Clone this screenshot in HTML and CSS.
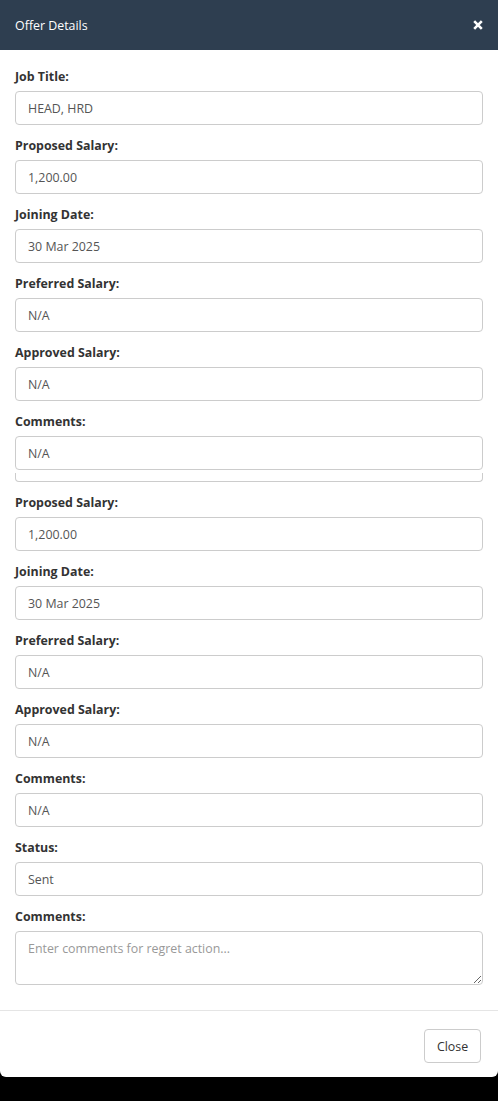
FILE: index.html
```html
<!DOCTYPE html>
<html lang="en">
<head>
<meta charset="utf-8">
<title>Offer Details</title>
<link rel="stylesheet" href="styles.css">
</head>
<body>
<div class="modal">
  <div class="modal-header">
    <span class="modal-title">Offer Details</span>
    <button class="close-x" aria-label="Close">
      <svg width="10" height="10" viewBox="0 0 10 10"><path d="M1.2 1.2 L8.8 8.8 M8.8 1.2 L1.2 8.8" stroke="#fff" stroke-width="2.6" stroke-linecap="butt"/></svg>
    </button>
  </div>
  <div class="modal-body">
    <div class="group"><label class="lbl">Job Title:</label><div class="field">HEAD, HRD</div></div>
    <div class="group"><label class="lbl">Proposed Salary:</label><div class="field">1,200.00</div></div>
    <div class="group"><label class="lbl">Joining Date:</label><div class="field">30 Mar 2025</div></div>
    <div class="group"><label class="lbl">Preferred Salary:</label><div class="field">N/A</div></div>
    <div class="group"><label class="lbl">Approved Salary:</label><div class="field">N/A</div></div>
    <div class="group"><label class="lbl">Comments:</label><div class="field">N/A</div><div class="field-tail"></div></div>
    <div class="group"><label class="lbl">Proposed Salary:</label><div class="field">1,200.00</div></div>
    <div class="group"><label class="lbl">Joining Date:</label><div class="field">30 Mar 2025</div></div>
    <div class="group"><label class="lbl">Preferred Salary:</label><div class="field">N/A</div></div>
    <div class="group"><label class="lbl">Approved Salary:</label><div class="field">N/A</div></div>
    <div class="group"><label class="lbl">Comments:</label><div class="field">N/A</div></div>
    <div class="group"><label class="lbl">Status:</label><div class="field">Sent</div></div>
    <div class="group last"><label class="lbl">Comments:</label><textarea class="area" placeholder="Enter comments for regret action..."></textarea></div>
  </div>
  <div class="modal-footer">
    <button class="btn">Close</button>
  </div>
</div>
</body>
</html>
```
FILE: styles.css
```css
html, body {
  margin: 0;
  padding: 0;
  background: #000;
}
body {
  font-family: "Open Sans", "Noto Sans", "Liberation Sans", sans-serif;
  font-size: 12.4px;
  color: #333;
}
.modal {
  background: #fff;
  border-radius: 0 0 6px 6px;
  overflow: hidden;
}
.modal-header {
  height: 50px;
  background: #2e3e50;
  display: flex;
  align-items: center;
  justify-content: space-between;
  padding: 0 15px;
}
.modal-title {
  color: #fff;
  font-size: 12.4px;
}
.close-x {
  background: none;
  border: 0;
  padding: 0;
  width: 10px;
  height: 10px;
  display: flex;
}
.modal-body {
  padding: 18px 15px 25px;
}
.group {
  margin-bottom: 12px;
}
.group.last {
  margin-bottom: 0;
}
.lbl {
  display: block;
  font-weight: 700;
  line-height: 18px;
  margin-bottom: 5px;
  color: #333;
}
.field {
  height: 34px;
  box-sizing: border-box;
  border: 1px solid #ccc;
  border-radius: 4px;
  padding: 0 12px;
  display: flex;
  align-items: center;
  color: #555;
}
.field-tail {
  height: 9px;
  margin-top: 3px;
  box-sizing: border-box;
  border: 1px solid #ccc;
  border-top: 0;
  border-radius: 0 0 4px 4px;
}
.area {
  display: block;
  width: 100%;
  height: 54px;
  box-sizing: border-box;
  border: 1px solid #ccc;
  border-radius: 4px;
  padding: 8px 12px;
  font-family: inherit;
  font-size: 12.4px;
  color: #555;
  resize: vertical;
}
.area::placeholder {
  color: #999;
}
.modal-footer {
  border-top: 1px solid #e5e5e5;
  padding: 18px 17px 14px 15px;
  display: flex;
  justify-content: flex-end;
}
.btn {
  height: 34px;
  width: 57px;
  background: #fff;
  border: 1px solid #ccc;
  border-radius: 4px;
  font-family: inherit;
  font-size: 12.4px;
  color: #333;
  padding: 0;
}
```
